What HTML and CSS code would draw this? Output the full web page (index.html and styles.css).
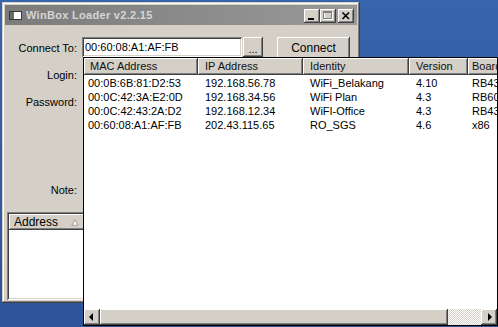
FILE: index.html
```html
<!DOCTYPE html>
<html>
  <head>
    <meta charset="utf-8" />
    <title>WinBox Loader</title>
    <link rel="stylesheet" href="styles.css">
  </head>
  <body>
    <div class="desktop">
      <div class="window">
        <div class="titleBar">
          <svg class="appIcon" width="13" height="9" viewBox="0 0 13 9">
            <rect x="0.5" y="0.5" width="12" height="8" fill="#fff" stroke="#3a3a3a"/>
            <rect x="1" y="1" width="4" height="7" fill="#6a6a6a"/>
          </svg>
          <span class="title">WinBox Loader v2.2.15</span>
          <div class="captionButtons">
            <span class="capBtn">
              <svg width="16" height="14" viewBox="0 0 16 14"><rect x="4" y="9" width="6" height="2" fill="#000"/></svg>
            </span>
            <span class="capBtn">
              <svg width="16" height="14" viewBox="0 0 16 14">
                <rect x="4.5" y="3.5" width="8" height="7" fill="none" stroke="#fff"/>
                <rect x="3.5" y="2.5" width="8" height="7" fill="none" stroke="#808080"/>
                <rect x="3" y="2" width="9" height="2" fill="#808080"/>
              </svg>
            </span>
            <span class="capBtn close">
              <svg width="16" height="14" viewBox="0 0 16 14">
                <path d="M4.5 3.5 L11 10 M11 3.5 L4.5 10" stroke="#000" stroke-width="1.6"/>
              </svg>
            </span>
          </div>
        </div>

        <div class="loginForm">
          <span class="label">Connect To:</span>
          <div class="connectRow">
            <input class="field" type="text" value="00:60:08:A1:AF:FB">
            <button class="btn dots">...</button>
            <button class="btn connect">Connect</button>
          </div>
          <span class="label">Login:</span>
          <input class="field hidden" type="text">
          <span class="label">Password:</span>
          <input class="field hidden" type="password">
          <span></span>
          <div class="options"></div>
          <span class="label">Note:</span>
          <input class="field hidden" type="text">
        </div>

        <div class="addressList">
          <div class="listHeader">
            <span>Address</span>
            <svg class="sortMark" width="8" height="7" viewBox="0 0 8 7">
              <polygon points="4,0.8 7.2,6.2 0.8,6.2" fill="#fff" stroke="#9a9a9a"/>
            </svg>
          </div>
        </div>
      </div>

      <div class="dropdown">
        <div class="listView">
          <div class="lvHeader">
            <span class="first">MAC Address</span>
            <span>IP Address</span>
            <span>Identity</span>
            <span>Version</span>
            <span class="last">Board</span>
          </div>
          <div class="lvBody">
            <div class="lvRow">
              <span class="first">00:0B:6B:81:D2:53</span>
              <span>192.168.56.78</span>
              <span>WiFi_Belakang</span>
              <span>4.10</span>
              <span class="last">RB433</span>
            </div>
            <div class="lvRow">
              <span class="first">00:0C:42:3A:E2:0D</span>
              <span>192.168.34.56</span>
              <span>WiFi Plan</span>
              <span>4.3</span>
              <span class="last">RB600</span>
            </div>
            <div class="lvRow">
              <span class="first">00:0C:42:43:2A:D2</span>
              <span>192.168.12.34</span>
              <span>WiFI-Office</span>
              <span>4.3</span>
              <span class="last">RB433</span>
            </div>
            <div class="lvRow">
              <span class="first">00:60:08:A1:AF:FB</span>
              <span>202.43.115.65</span>
              <span>RO_SGS</span>
              <span>4.6</span>
              <span class="last">x86</span>
            </div>
          </div>
        </div>
        <div class="hScroll">
          <span class="scrollBtn">
            <svg width="16" height="16" viewBox="0 0 16 16"><polygon points="5,8 9,4 9,12" fill="#000"/></svg>
          </span>
          <span class="thumb"></span>
          <span class="track"></span>
          <span class="scrollBtn">
            <svg width="16" height="16" viewBox="0 0 16 16"><polygon points="11,8 7,4 7,12" fill="#000"/></svg>
          </span>
        </div>
      </div>
    </div>
  </body>
</html>
```

FILE: styles.css
```css
html {
  background-color: #3560a6;
}

body {
  margin: 0;
  font-family: "Liberation Sans", Arial, sans-serif;
  font-size: 11px;
  color: #000;
}

.desktop {
  position: relative;
  width: 498px;
  height: 327px;
  overflow: hidden;
  background: linear-gradient(to bottom, #3864ab, #2d549b);
}

/* main loader window */
.window {
  position: absolute;
  left: 2px;
  top: 2px;
  width: 358px;
  height: 301px;
  box-sizing: border-box;
  padding: 3px;
  background-color: #d4d0c8;
  box-shadow: inset -1px -1px #404040, inset 1px 1px #d4d0c8, inset -2px -2px #808080, inset 2px 2px #fff;
}

.titleBar {
  display: flex;
  align-items: center;
  height: 20px;
  padding: 0 3px 0 4px;
  background: linear-gradient(90deg, #7b7b7b, #999);
  color: #d6d6d6;
  font-weight: bold;
}

.title {
  letter-spacing: 0.3px;
}

.appIcon {
  margin-right: 4px;
}

.captionButtons {
  display: flex;
  margin-left: auto;
  padding-top: 1px;
}

.capBtn,
.btn,
.scrollBtn,
.thumb,
.lvHeader span,
.listHeader {
  background-color: #d4d0c8;
  box-shadow: inset -1px -1px #404040, inset 1px 1px #fff, inset -2px -2px #808080, inset 2px 2px #d4d0c8;
}

.capBtn {
  display: block;
  width: 16px;
  height: 14px;
}

.capBtn svg {
  display: block;
}

.capBtn.close {
  margin-left: 2px;
}

/* form */
.loginForm {
  display: grid;
  grid-template-columns: 72px 1fr;
  grid-template-rows: 21px 20px 20px 54px 20px;
  column-gap: 5px;
  row-gap: 7px;
  margin-top: 12px;
  align-items: center;
}

.label {
  text-align: right;
}

.connectRow {
  display: flex;
  align-items: flex-start;
  height: 21px;
}

.field {
  box-sizing: border-box;
  width: 160px;
  height: 20px;
  margin: 0;
  border: none;
  padding: 0 3px;
  background: #fff;
  font: inherit;
  color: #000;
  box-shadow: inset 1px 1px #808080, inset -1px -1px #fff, inset 2px 2px #404040, inset -2px -2px #d4d0c8;
}

.field.hidden {
  margin-left: 2px;
}

.btn {
  box-sizing: border-box;
  border: none;
  margin: 0;
  padding: 0;
  font: inherit;
  color: #000;
}

.dots {
  width: 20px;
  height: 20px;
  margin-left: 1px;
  padding-top: 3px;
}

.connect {
  width: 73px;
  height: 22px;
  margin-left: 14px;
  font-size: 12px;
}

.addressList {
  box-sizing: border-box;
  width: 348px;
  height: 88px;
  margin: 12px 0 0 2px;
  padding: 2px;
  background: #fff;
  box-shadow: inset 1px 1px #808080, inset -1px -1px #fff, inset 2px 2px #404040, inset -2px -2px #d4d0c8;
}

.listHeader {
  display: flex;
  align-items: center;
  width: 150px;
  height: 16px;
  padding-left: 5px;
  font-size: 12px;
}

.sortMark {
  margin-left: 13px;
}

/* dropdown of discovered routers */
.dropdown {
  position: absolute;
  left: 83px;
  top: 57px;
  width: 415px;
  height: 269px;
  box-sizing: border-box;
  border: 1px solid #000;
  background: #fff;
  display: flex;
  flex-direction: column;
  overflow: hidden;
}

.listView {
  flex: 1;
  overflow: hidden;
}

.lvHeader,
.lvRow {
  display: grid;
  grid-template-columns: 114px 105px 106px 59px 100px;
  white-space: nowrap;
}

.lvHeader span {
  height: 17px;
  line-height: 17px;
  padding-left: 7px;
  color: #111;
}

.lvHeader span.first {
  padding-left: 6px;
}

.lvBody {
  padding-top: 1px;
}

.lvRow span {
  height: 14px;
  line-height: 14px;
  padding-left: 7px;
  overflow: hidden;
}

.lvRow span.first {
  padding-left: 4px;
}

.lvHeader span.last,
.lvRow span.last {
  padding-left: 4px;
}

.hScroll {
  display: flex;
  height: 16px;
}

.scrollBtn {
  display: block;
  width: 16px;
  height: 16px;
}

.scrollBtn svg {
  display: block;
}

.thumb {
  width: 348px;
}

.track {
  flex: 1;
  background: repeating-conic-gradient(#fff 0 25%, #d4d0c8 0 50%) 0 0 / 2px 2px;
}
```
